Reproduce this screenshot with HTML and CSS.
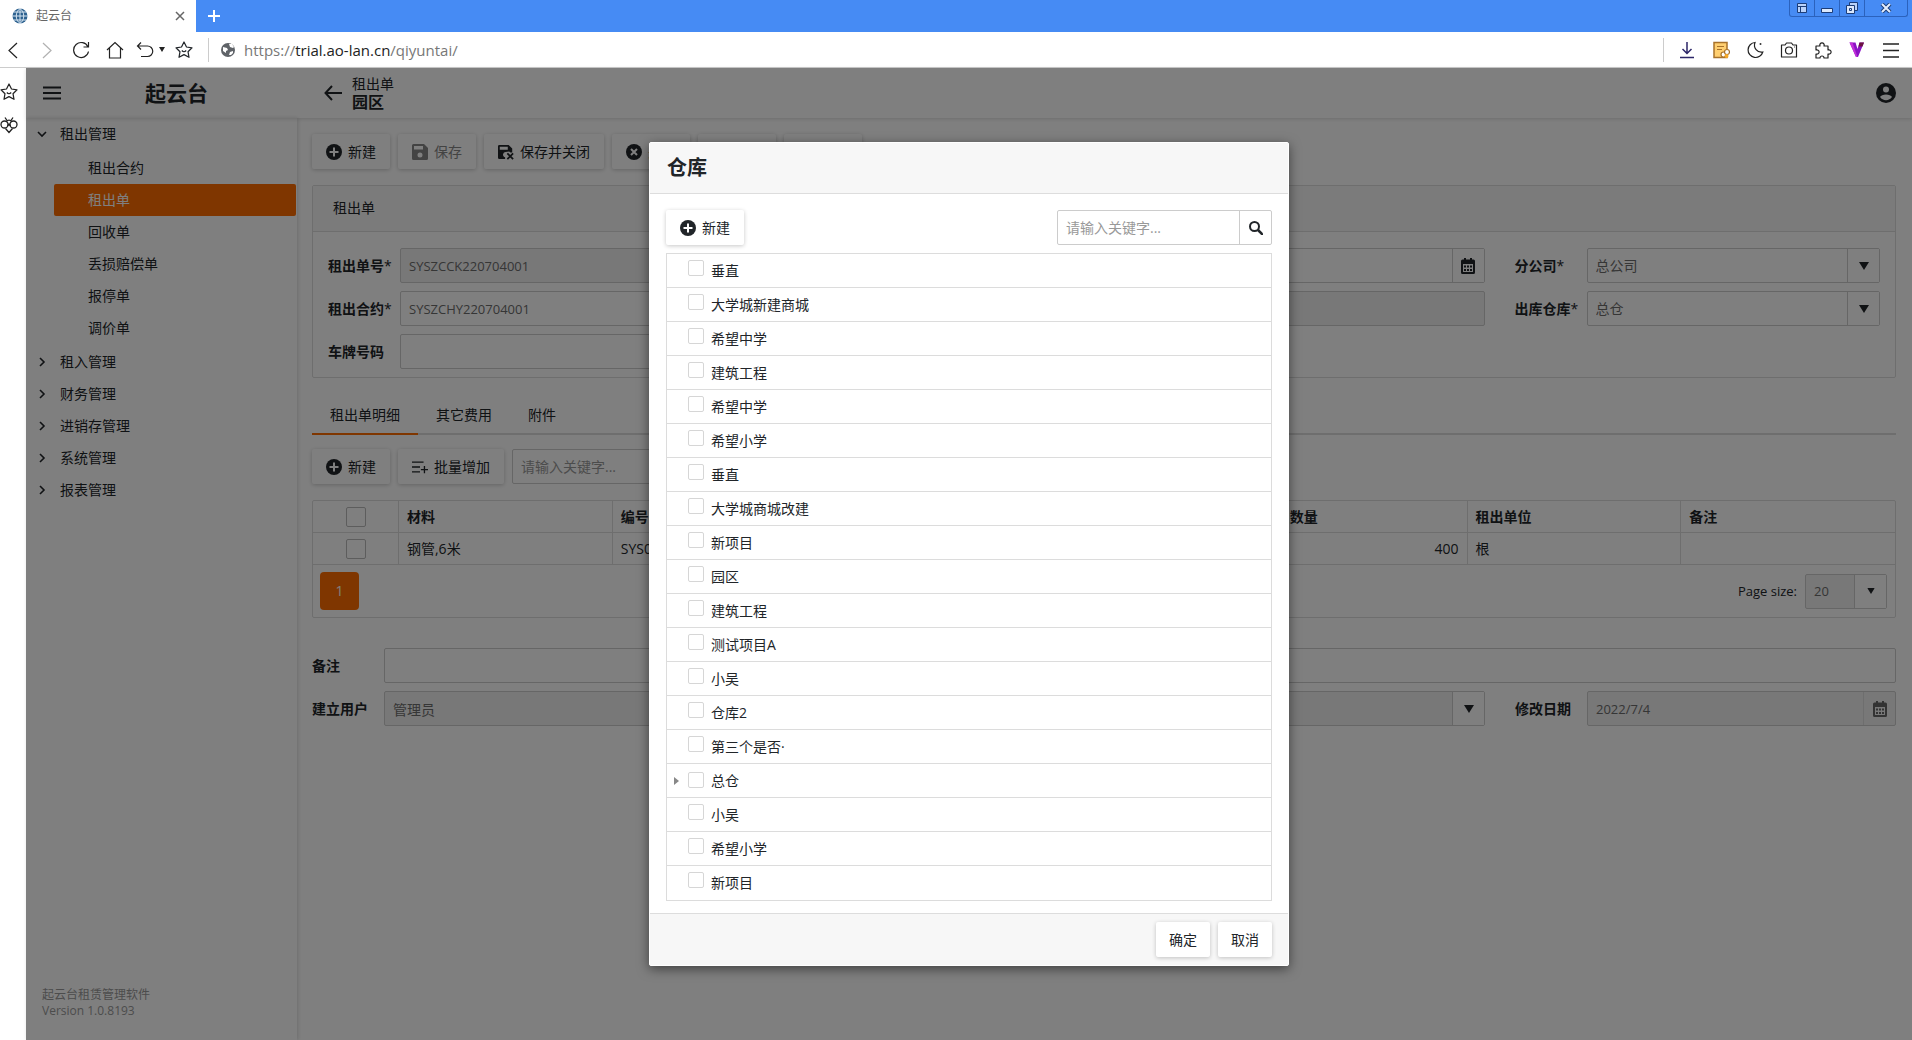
FILE: index.html
```html
<!DOCTYPE html>
<html lang="zh-CN">
<head>
<meta charset="utf-8">
<title>起云台</title>
<link rel="stylesheet" href="styles.css">
</head>
<body>
<svg class="sprite" aria-hidden="true">
  <symbol id="i-plus" viewBox="0 0 16 16"><circle cx="8" cy="8" r="8"/><path d="M7 3.500h2V7h3.500v2H9v3.500H7V9H3.500V7H7z" fill="#fff"/></symbol>
  <symbol id="i-save" viewBox="0 0 16 16"><path fill-rule="evenodd" d="M1.500 0H12l4 4v10.500a1.500 1.500 0 0 1-1.500 1.500h-13A1.500 1.500 0 0 1 0 14.500v-13A1.500 1.500 0 0 1 1.500 0zM2 2v3.500h9V2zM8 8.500a2.500 2.500 0 1 0 0 5 2.500 2.500 0 0 0 0-5z"/></symbol>
  <symbol id="i-saveclose" viewBox="0 0 18 16"><path fill-rule="evenodd" d="M1.500 0H12l4 4v4.500l-2 0-1.500-1-4 .5a3 3 0 0 0-1.500 5.500l1 .5V16H1.500A1.500 1.500 0 0 1 0 14.500v-13A1.500 1.500 0 0 1 1.500 0zM2 2v3.500h9V2z"/><path d="M10.500 9.500l6.500 6.500M17 9.500L10.500 16" stroke="currentColor" stroke-width="2"/></symbol>
  <symbol id="i-close" viewBox="0 0 16 16"><circle cx="8" cy="8" r="8"/><path d="M5 5l6 6M11 5l-6 6" stroke="#fff" stroke-width="2"/></symbol>
  <symbol id="i-addlist" viewBox="0 0 18 16"><path d="M0 2.500h13M0 8h9M0 13.500h9M14 7v8M10 11h8" stroke="currentColor" stroke-width="1.500" fill="none"/></symbol>
  <symbol id="i-calendar" viewBox="0 0 14 16"><path fill-rule="evenodd" d="M3 0h2v1.500h4V0h2v1.500h1.500A1.500 1.500 0 0 1 14 3v11.500a1.500 1.500 0 0 1-1.500 1.500h-11A1.500 1.500 0 0 1 0 14.500V3a1.500 1.500 0 0 1 1.500-1.500H3zM2 6v8h10V6z"/><path d="M3 7.500h2v2H3zM6 7.500h2v2H6zM9 7.500h2v2H9zM3 11h2v2H3zM6 11h2v2H6zM9 11h2v2H9z"/></symbol>
  <symbol id="i-down" viewBox="0 0 10 8"><path d="M0 0h10L5 8z"/></symbol>
  <symbol id="i-right" viewBox="0 0 10 10"><path d="M3 1l4 4-4 4" fill="none" stroke="currentColor" stroke-width="1.600"/></symbol>
  <symbol id="i-star" viewBox="0 0 18 18"><path d="M9 1l2.500 5 5.500.8-4 3.900 1 5.600-5-2.700-5 2.700 1-5.600-4-3.900L6.500 6z" fill="none" stroke="currentColor" stroke-width="1.200" stroke-linejoin="round"/><path d="M6.800 9.500q2.200 2.500 4.400 0" fill="none" stroke="currentColor" stroke-width="1.200"/></symbol>
</svg>

<header class="tabbar">
  <div class="tab">
    <svg width="16" height="16" viewBox="0 0 16 16"><circle cx="8" cy="8" r="7.500" fill="#2d618f"/><path d="M8 0v16M0 8h16M1.500 4h13M1.500 12h13M8 .5C3 4 3 12 8 15.500M8 .5c5 3.500 5 11.500 0 15" fill="none" stroke="#d5e4f0"/></svg>
    <span class="tab-name">起云台</span>
    <button class="plain" aria-label="关闭标签页"><svg width="10" height="10" viewBox="0 0 10 10"><path d="M1 1l8 8M9 1L1 9" stroke="#666" stroke-width="1.500"/></svg></button>
  </div>
  <button class="plain newtab" aria-label="新标签页"><svg width="12" height="12" viewBox="0 0 12 12"><path d="M6 0v12M0 6h12" stroke="#fff" stroke-width="2"/></svg></button>
  <div class="winctl">
    <button aria-label="布局"><svg width="10" height="10" viewBox="0 0 10 10"><path d="M.5.5h9v9h-9zM0 3.500h10M3.500 3v7" fill="#b9d2fa" stroke="#1c3d78"/></svg></button>
    <button aria-label="最小化"><svg width="12" height="10" viewBox="0 0 12 10"><path d="M.5 5.500h11v4H.5z" fill="#dbe8fc" stroke="#1c3d78"/></svg></button>
    <button aria-label="还原"><svg width="12" height="12" viewBox="0 0 12 12"><path d="M3.500.5h8v8h-8z" fill="#b9d2fa" stroke="#1c3d78"/><path d="M.5 3.500h8v8h-8z" fill="#dbe8fc" stroke="#1c3d78"/><path d="M3.500 6.500h2v2h-2z" fill="none" stroke="#1c3d78"/></svg></button>
    <button class="wide" aria-label="关闭"><svg width="12" height="10" viewBox="0 0 12 10"><path d="M2 1l8 8M10 1L2 9" stroke="#1c3d78" stroke-width="4"/><path d="M2 1l8 8M10 1L2 9" stroke="#e4eefd" stroke-width="2"/></svg></button>
  </div>
</header>

<div class="toolbar">
  <button class="plain" aria-label="后退"><svg width="18" height="18" viewBox="0 0 18 18"><path d="M13 2L5 9.500 13 17"/></svg></button>
  <button class="plain faded" aria-label="前进"><svg width="18" height="18" viewBox="0 0 18 18"><path d="M5 2l8 7.500L5 17"/></svg></button>
  <button class="plain" aria-label="刷新"><svg width="18" height="18" viewBox="0 0 18 18"><path d="M16.500 1v5h-5M16 6a7.500 7.500 0 1 0 .5 4.500"/></svg></button>
  <button class="plain" aria-label="主页"><svg width="18" height="18" viewBox="0 0 18 18"><path d="M1 9l8-7.500L17 9M3.500 7v10h11V7"/></svg></button>
  <button class="plain undo" aria-label="撤销"><svg width="18" height="18" viewBox="0 0 18 18"><path d="M5 1.500L1.500 5 5 8.500M2 5h9.500a5 5 0 0 1 0 10.500H5"/></svg><svg class="solid" width="6" height="5" viewBox="0 0 10 8"><use href="#i-down"/></svg></button>
  <button class="plain" aria-label="收藏"><svg width="18" height="18"><use href="#i-star"/></svg></button>
  <div class="address">
    <svg width="14" height="14" viewBox="0 0 14 14"><circle cx="7" cy="7" r="7" fill="#5f6368" stroke="none"/><path d="M2 4l4 1 1 2-2 1v2L2 8zM8 1l1 3 3 1 1-1-2-3zM8 12l1-3 3-1v2l-2 2z" fill="#fff" stroke="none"/></svg>
    <span class="url">https://<b>trial.ao-lan.cn</b>/qiyuntai/</span>
  </div>
  <div class="tools">
    <button class="plain" aria-label="下载"><svg width="18" height="18" viewBox="0 0 18 18"><path d="M9 1v11M4.500 8L9 12.500 13.500 8M2 16.500h14" stroke="#2c2668" stroke-width="1.500"/></svg></button>
    <button class="plain" aria-label="笔记"><svg width="18" height="18" viewBox="0 0 18 18"><path d="M2 1.500h13v15H2z" fill="#ffcf70" stroke="#a8722a" stroke-width="1.500"/><path d="M5 5.500h7M5 8.500h5" stroke="#a8722a"/><circle cx="11.500" cy="13.500" r="2.500" fill="#fff" stroke="#a8722a"/><circle cx="15" cy="11" r="2.500" fill="#fff" stroke="#a8722a"/><circle cx="14.500" cy="15" r="2" fill="#f7a928" stroke="none"/></svg></button>
    <button class="plain" aria-label="夜间模式"><svg width="18" height="18" viewBox="0 0 18 18"><path d="M9 1.500A7.500 7.500 0 1 0 16.800 11 7 7 0 0 1 9 1.500z"/><circle cx="14.500" cy="3" r="1" fill="#333" stroke="none"/></svg></button>
    <button class="plain" aria-label="截图"><svg width="18" height="18" viewBox="0 0 18 18"><path d="M1.500 4H5l1.500-2h5L13 4h3.500v12h-15z" stroke-linejoin="round"/><circle cx="9" cy="9.500" r="3.500"/><path d="M14 6h.8"/></svg></button>
    <button class="plain" aria-label="扩展"><svg width="18" height="18" viewBox="0 0 18 18"><path d="M2 5h4a2.200 2.200 0 1 1 4 0h4v4a2.200 2.200 0 1 1 0 4v4h-4a2 2 0 1 0-4 0H2v-4a2.200 2.200 0 1 0 0-4z" stroke-linejoin="round"/></svg></button>
    <button class="plain" aria-label="V"><svg width="18" height="18" viewBox="0 0 18 18"><path d="M1.500 1.500h6L9.500 8l2-6.500H16L10 16H8z" fill="#8a12c4" stroke="none"/><path d="M1.500 1.500h3L9.500 16H8z" fill="#c22fd8" stroke="none"/><path d="M11.500 1.500H16l-1.500 4h-4z" fill="#6b1440" stroke="none"/></svg></button>
    <button class="plain" aria-label="菜单"><svg width="18" height="18" viewBox="0 0 18 18"><path d="M1 3h16M1 9.500h16M1 16h16" stroke-width="1.300"/></svg></button>
  </div>
</div>

<div class="workspace">
  <aside class="rail">
    <button class="plain" aria-label="收藏夹"><svg width="18" height="18"><use href="#i-star"/></svg></button>
    <button class="plain" aria-label="工具"><svg class="line" width="18" height="18" viewBox="0 0 18 18"><circle cx="4.500" cy="8.500" r="3.500"/><circle cx="13.500" cy="8.500" r="3.500"/><path d="M6.500 5.500a3 3 0 0 1 5 0M7.500 10L9 8l1.500 2M5.500 12.500L9 16.500l3.500-4M5 1.500l2 3M13 1.500l-2 3"/></svg></button>
  </aside>

  <div class="app">
    <header class="apphead">
      <div class="brand">
        <button class="plain" aria-label="菜单"><svg width="18" height="14" viewBox="0 0 18 14"><path d="M0 1.500h18M0 7h18M0 12.500h18" stroke="#212529" stroke-width="2"/></svg></button>
        <h1>起云台</h1>
      </div>
      <button class="plain back" aria-label="返回"><svg class="line" width="18" height="16" viewBox="0 0 18 16"><path d="M8 1L1.500 8 8 15M2 8h16" stroke="#212529" stroke-width="2"/></svg></button>
      <div class="crumb"><span>租出单</span><strong>园区</strong></div>
      <button class="plain account" aria-label="账户"><svg width="20" height="20" viewBox="0 0 20 20"><circle cx="10" cy="10" r="10" fill="#212529"/><circle cx="10" cy="6.500" r="3" fill="#fff"/><path d="M4 14c1.500-3.500 10.500-3.500 12 0a7.200 7.200 0 0 1-12 0z" fill="#fff"/></svg></button>
    </header>

    <div class="columns">
      <nav class="sidebar">
        <button class="group"><svg class="open" width="10" height="10"><use href="#i-right"/></svg>租出管理</button>
        <div class="sub">
          <a href="#">租出合约</a>
          <a href="#" class="current">租出单</a>
          <a href="#">回收单</a>
          <a href="#">丢损赔偿单</a>
          <a href="#">报停单</a>
          <a href="#">调价单</a>
        </div>
        <button class="group"><svg width="10" height="10"><use href="#i-right"/></svg>租入管理</button>
        <button class="group"><svg width="10" height="10"><use href="#i-right"/></svg>财务管理</button>
        <button class="group"><svg width="10" height="10"><use href="#i-right"/></svg>进销存管理</button>
        <button class="group"><svg width="10" height="10"><use href="#i-right"/></svg>系统管理</button>
        <button class="group"><svg width="10" height="10"><use href="#i-right"/></svg>报表管理</button>
        <p class="version">起云台租赁管理软件<br>Version 1.0.8193</p>
      </nav>

      <main class="main">
        <div class="actions">
          <button class="btn"><svg width="16" height="16"><use href="#i-plus"/></svg>新建</button>
          <button class="btn" disabled><svg width="16" height="16"><use href="#i-save"/></svg>保存</button>
          <button class="btn"><svg width="16" height="16"><use href="#i-saveclose"/></svg>保存并关闭</button>
          <button class="btn"><svg width="16" height="16"><use href="#i-close"/></svg>关闭</button>
          <button class="btn"><svg width="16" height="16"><use href="#i-close"/></svg>删除</button>
          <button class="btn"><svg width="16" height="16"><use href="#i-save"/></svg>打印</button>
        </div>

        <section class="panel">
          <h2>租出单</h2>
          <div class="fields">
            <div class="field c1"><label for="f-no">租出单号<i>*</i></label><input id="f-no" class="box latin" value="SYSZCCK220704001" readonly></div>
            <div class="field c3"><label for="f-date">租出日期<i>*</i></label><div class="box combo"><input id="f-date"><span class="arrow"><svg width="14" height="16"><use href="#i-calendar"/></svg></span></div></div>
            <div class="field c4"><label for="f-org">分公司<i>*</i></label><div class="box combo"><select id="f-org"><option>总公司</option></select><span class="arrow"><svg width="10" height="8"><use href="#i-down"/></svg></span></div></div>
            <div class="field c1"><label for="f-con">租出合约<i>*</i></label><input id="f-con" class="box latin" value="SYSZCHY220704001"></div>
            <div class="field c3"><label for="f-cus">客户</label><input id="f-cus" class="box" readonly></div>
            <div class="field c4"><label for="f-wh">出库仓库<i>*</i></label><div class="box combo"><select id="f-wh"><option>总仓</option></select><span class="arrow"><svg width="10" height="8"><use href="#i-down"/></svg></span></div></div>
            <div class="field c1"><label for="f-car">车牌号码</label><input id="f-car" class="box"></div>
          </div>
        </section>

        <div class="tabs" role="tablist">
          <button role="tab" class="on">租出单明细</button><button role="tab">其它费用</button><button role="tab">附件</button>
        </div>

        <div class="actions">
          <button class="btn"><svg width="16" height="16"><use href="#i-plus"/></svg>新建</button>
          <button class="btn"><svg width="16" height="16"><use href="#i-addlist"/></svg>批量增加</button>
          <input class="box search" placeholder="请输入关键字..." aria-label="关键字">
        </div>

        <div class="gridbox">
          <table>
            <thead><tr><th class="tick"><input type="checkbox" aria-label="全选"></th><th>材料</th><th>编号</th><th>型号</th><th>规格</th><th>租出数量</th><th>租出单位</th><th>备注</th></tr></thead>
            <tbody><tr><td class="tick"><input type="checkbox" aria-label="选择"></td><td>钢管,6米</td><td>SYS001</td><td></td><td></td><td class="num">400</td><td>根</td><td></td></tr></tbody>
          </table>
          <div class="pager">
            <button class="page">1</button>
            <label for="f-size">Page size:</label>
            <div class="box combo size"><select id="f-size"><option>20</option></select><span class="arrow"><svg width="8" height="6" viewBox="0 0 10 8"><use href="#i-down"/></svg></span></div>
          </div>
        </div>

        <div class="fields flush">
          <div class="field all"><label for="f-note">备注</label><input id="f-note" class="box"></div>
          <div class="field c1"><label for="f-user">建立用户</label><input id="f-user" class="box" value="管理员" readonly></div>
          <div class="field c3"><label for="f-mod">修改用户</label><div class="box combo locked"><select id="f-mod"><option></option></select><span class="arrow"><svg width="10" height="8"><use href="#i-down"/></svg></span></div></div>
          <div class="field c4"><label for="f-mdate">修改日期</label><div class="box combo locked dim latin"><input id="f-mdate" value="2022/7/4" readonly><span class="arrow"><svg width="14" height="16"><use href="#i-calendar"/></svg></span></div></div>
        </div>
      </main>
    </div>

    <div class="overlay">
      <section class="dialog" role="dialog" aria-labelledby="dlg">
        <header><h2 id="dlg">仓库</h2></header>
        <div class="content">
          <div class="topline">
            <button class="btn"><svg width="16" height="16"><use href="#i-plus"/></svg>新建</button>
            <div class="box combo find"><input placeholder="请输入关键字..." aria-label="关键字"><button class="plain" aria-label="搜索"><svg width="14" height="14" viewBox="0 0 14 14"><circle class="line" cx="5.500" cy="5.500" r="4.500" stroke="#212529" stroke-width="2"/><path d="M9 9l5 5" stroke="#212529" stroke-width="2.500"/></svg></button></div>
          </div>
          <ul class="tree">
            <li><label><input type="checkbox">垂直</label></li>
            <li><label><input type="checkbox">大学城新建商城</label></li>
            <li><label><input type="checkbox">希望中学</label></li>
            <li><label><input type="checkbox">建筑工程</label></li>
            <li><label><input type="checkbox">希望中学</label></li>
            <li><label><input type="checkbox">希望小学</label></li>
            <li><label><input type="checkbox">垂直</label></li>
            <li><label><input type="checkbox">大学城商城改建</label></li>
            <li><label><input type="checkbox">新项目</label></li>
            <li><label><input type="checkbox">园区</label></li>
            <li><label><input type="checkbox">建筑工程</label></li>
            <li><label><input type="checkbox">测试项目A</label></li>
            <li><label><input type="checkbox">小吴</label></li>
            <li><label><input type="checkbox">仓库2</label></li>
            <li><label><input type="checkbox">第三个是否·</label></li>
            <li class="parent"><button class="plain" aria-label="展开"><svg width="5" height="8" viewBox="0 0 5 8"><path d="M0 0l5 4-5 4z" fill="#888"/></svg></button><label><input type="checkbox">总仓</label></li>
            <li><label><input type="checkbox">小吴</label></li>
            <li><label><input type="checkbox">希望小学</label></li>
            <li><label><input type="checkbox">新项目</label></li>
          </ul>
        </div>
        <footer><button class="btn">确定</button><button class="btn">取消</button></footer>
      </section>
    </div>
  </div>
</div>
</body>
</html>
```
FILE: styles.css
```css
* { box-sizing: border-box; }
body {
  margin: 0;
  min-height: 100vh;
  display: flex;
  flex-direction: column;
  font: 14px/20px "Open Sans", "Noto Sans CJK SC", sans-serif;
  color: #212529;
  background: #fff;
}
button, input, select { font: inherit; color: inherit; }
h1, h2, p, ul { margin: 0; padding: 0; }
svg { display: block; flex: none; fill: currentColor; }
.line { fill: none; }
.sprite { position: absolute; width: 0; height: 0; }
.plain {
  display: flex;
  align-items: center;
  justify-content: center;
  padding: 0;
  border: 0;
  background: none;
}

/* Browser frame */
.tabbar { display: flex; height: 32px; background: #468bf4; }
.tab {
  display: flex;
  align-items: center;
  gap: 8px;
  width: 196px;
  padding: 0 11px 0 12px;
  background: #fff;
  font-size: 12px;
  color: #666;
}
.tab-name { flex: 1; }
.newtab { width: 36px; }
.winctl {
  display: flex;
  height: 17px;
  margin: 0 4px 0 auto;
  border: 1px solid #2b62bd;
  border-top: 0;
  border-radius: 0 0 3px 3px;
}
.winctl button {
  display: flex;
  align-items: center;
  justify-content: center;
  width: 25px;
  padding: 0;
  border: 0;
  border-right: 1px solid #2b62bd;
  background: none;
}
.winctl .wide { width: 42px; border-right: 0; }
.toolbar {
  display: flex;
  align-items: center;
  gap: 16px;
  height: 36px;
  padding: 0 12px 0 4px;
  border-bottom: 1px solid #ccc;
}
.toolbar svg { fill: none; stroke: #222; stroke-width: 1.2; }
.toolbar .solid { fill: #222; stroke: none; }
.faded { opacity: .35; }
.undo { gap: 5px; margin: 0 -6px 0 -4px; }
.address {
  display: flex;
  align-items: center;
  gap: 9px;
  height: 24px;
  margin-left: -1px;
  padding-left: 12px;
  border-left: 1px solid #ccc;
}
.url { font-size: 15px; color: #777; }
.url b { font-weight: 400; color: #222; }
.tools {
  display: flex;
  align-items: center;
  gap: 16px;
  height: 24px;
  margin-left: auto;
  padding-left: 14px;
  border-left: 1px solid #ccc;
}
.workspace { display: flex; flex: 1; }
.rail {
  display: flex;
  flex-direction: column;
  gap: 15px;
  width: 26px;
  padding-top: 15px;
}
.rail .plain { width: 18px; }
.rail svg { color: #222; }
.rail .line { stroke: #222; stroke-width: 1.3; }

/* Application */
.app {
  position: relative;
  display: flex;
  flex-direction: column;
  flex: 1;
  min-width: 0;
}
.apphead {
  position: relative;
  display: flex;
  align-items: center;
  height: 50px;
  padding-right: 16px;
  box-shadow: 0 1px 4px rgba(0, 0, 0, .15);
}
.brand { display: flex; align-items: center; width: 271px; padding-left: 17px; }
.brand h1 { flex: 1; padding-right: 5px; text-align: center; font-size: 21px; line-height: 30px; }
.back { margin-left: 27px; }
.crumb { display: flex; flex-direction: column; margin-left: 10px; line-height: 18px; }
.crumb strong { font-size: 16px; }
.account { margin-left: auto; }
.columns { display: flex; flex: 1; }
.sidebar {
  display: flex;
  flex-direction: column;
  width: 271px;
  flex: none;
  padding-bottom: 21px;
  box-shadow: 1px 0 4px rgba(0, 0, 0, .15);
}
.group {
  display: flex;
  align-items: center;
  gap: 13px;
  height: 32px;
  padding: 0 0 0 11px;
  border: 0;
  background: none;
}
.open { transform: rotate(90deg); }
.sub { padding: 2px 1px 2px 28px; }
.sub a {
  display: block;
  padding-left: 34px;
  border-radius: 2px;
  line-height: 32px;
  color: inherit;
  text-decoration: none;
}
.sub .current { background: #ff6d00; color: #fff; }
.version { margin-top: auto; padding-left: 16px; font-size: 12px; line-height: 16px; color: #999; }

.main { flex: 1; min-width: 0; padding: 16px 16px 16px 15px; }
.actions { display: flex; gap: 8px; }
.btn {
  display: flex;
  align-items: center;
  gap: 6px;
  height: 35px;
  padding: 0 14px;
  border: 0;
  border-radius: 2px;
  background: #fff;
  box-shadow: 0 1px 4px rgba(0, 0, 0, .22);
  white-space: nowrap;
}
.btn svg { overflow: visible; }
.btn:disabled { color: #868686; }
.panel { margin-top: 16px; border: 1px solid #dcdcdc; border-radius: 2px; }
.panel h2 {
  padding: 12px 20px 13px;
  border-bottom: 1px solid #dcdcdc;
  background: #f7f7f7;
  font-size: 14px;
  line-height: 20px;
  font-weight: 400;
}
.fields { display: grid; grid-template-columns: repeat(4, minmax(0, 1fr)); row-gap: 8px; }
.panel .fields { padding: 16px 0 8px; }
.field { display: flex; align-items: center; padding: 0 15px; }
.field label { width: 72px; flex: none; font-weight: 700; }
.field i { font-style: normal; font-weight: 400; }
.c1 { grid-column: 1; }
.c3 { grid-column: 3; }
.c4 { grid-column: 4; }
.all { grid-column: 1 / -1; }
.flush { margin-top: 30px; }
.flush .c1, .flush .all { padding-left: 0; }
.flush .c4, .flush .all { padding-right: 0; }
.box {
  flex: 1;
  min-width: 0;
  height: 35px;
  padding: 0 8px;
  border: 1px solid #ccc;
  border-radius: 2px;
  background: #fff;
  color: #6c6c6c;
}
input.box:read-only { background: #f0f0f0; }
.latin { font-size: 13px; }
.combo { display: grid; grid-template-columns: 1fr 32px; padding: 0; }
.locked { background: #f0f0f0; }
.combo input, .combo select {
  grid-area: 1 / 1 / 2 / 3;
  width: 100%;
  min-width: 0;
  padding: 0 8px;
  border: 0;
  background: none;
  appearance: none;
}
.arrow {
  grid-area: 1 / 2;
  display: flex;
  align-items: center;
  justify-content: center;
  border-left: 1px solid #ccc;
  background: #fff;
  color: #212529;
  pointer-events: none;
}
.dim .arrow { background: none; color: #666; border-left-color: #ddd; }
.tabs { display: flex; height: 40px; margin: 17px 0 14px; border-bottom: 2px solid #ddd; }
.tabs button { height: 40px; padding: 2px 18px 0; border: 0; border-bottom: 2px solid transparent; background: none; }
.tabs .on { border-bottom-color: #ff6d00; }
.search { flex: none; width: 240px; }
::placeholder { color: #999; opacity: 1; }
.gridbox { margin-top: 16px; border: 1px solid #dcdcdc; border-radius: 2px; }
table { width: 100%; table-layout: fixed; border-collapse: separate; border-spacing: 0; }
th, td {
  height: 32px;
  padding: 0 8px;
  border: 0 solid #dcdcdc;
  border-width: 0 1px 1px 0;
  text-align: left;
}
tr > :last-child { border-right: 0; }
.tick { width: 86px; text-align: center; }
.num { text-align: right; }
input[type="checkbox"] {
  appearance: none;
  width: 16px;
  height: 16px;
  margin: 0;
  border: 1px solid #d6d6d6;
  border-radius: 2px;
  background: #fff;
}
.tick input[type="checkbox"] { width: 20px; height: 20px; border-color: #bbb; vertical-align: middle; }
.pager { display: flex; align-items: center; height: 52px; padding: 0 8px 0 7px; }
.page { width: 39px; height: 38px; margin-right: auto; padding: 0; border: 0; border-radius: 4px; background: #ff6d00; color: #fff; }
.pager label { font-size: 13px; }
.size { flex: none; width: 82px; margin-left: 8px; background: #f0f0f0; font-size: 13px; }

/* Dialog */
.overlay {
  position: absolute;
  inset: 0;
  display: flex;
  align-items: center;
  justify-content: center;
  background: rgba(0, 0, 0, .5);
}
.dialog {
  width: 640px;
  border: 1px solid #fff;
  border-radius: 2px;
  background: #fff;
  box-shadow: 0 3px 12px rgba(0, 0, 0, .5);
}
.dialog header { padding: 10px 17px; border-bottom: 1px solid #ddd; background: #f7f7f7; }
.dialog h2 { font-size: 20px; line-height: 30px; }
.content { padding: 16px 16px 12px; }
.topline { display: flex; justify-content: space-between; }
.find { flex: none; width: 215px; }
.find .plain { grid-area: 1 / 2; border-left: 1px solid #ccc; }
.tree { margin-top: 8px; border: 1px solid #dcdcdc; list-style: none; }
.tree li { display: flex; padding-left: 21px; border-bottom: 1px solid #dcdcdc; }
.tree li:last-child { border-bottom-color: transparent; }
.tree label { display: flex; flex: 1; gap: 7px; height: 33px; line-height: 33px; }
.tree input { margin-top: 6px; }
.tree .parent { padding-left: 7px; }
.parent .plain { width: 5px; margin-right: 9px; }
.parent input { margin-top: 8px; }
.dialog footer {
  display: flex;
  justify-content: flex-end;
  gap: 8px;
  padding: 8px 16px;
  border-top: 1px solid #ddd;
  background: #f7f7f7;
}
.dialog footer .btn { padding: 0 13px; }
```
